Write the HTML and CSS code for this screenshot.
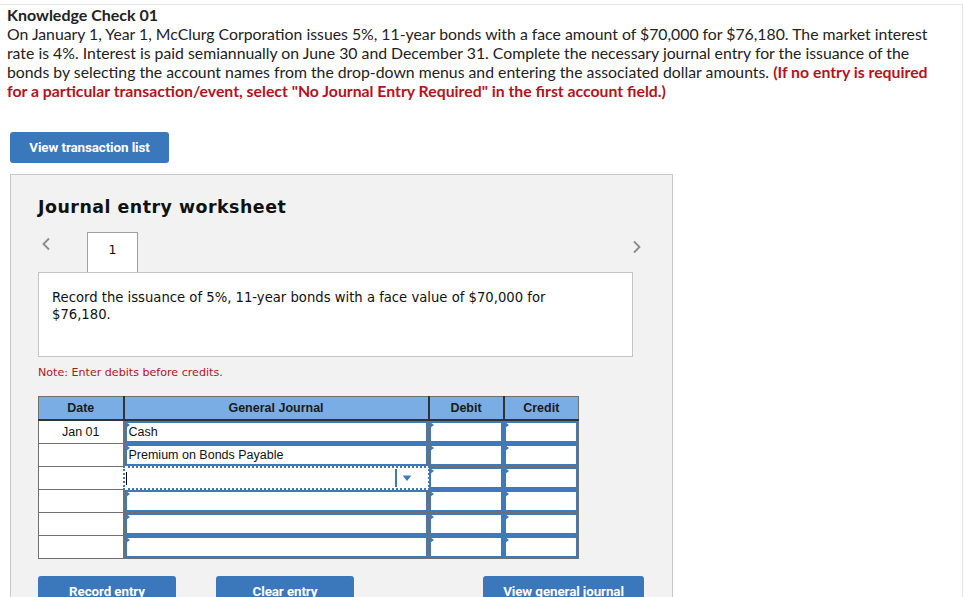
FILE: index.html
```html
<!DOCTYPE html>
<html>
<head>
<meta charset="utf-8">
<link rel="stylesheet" href="styles.css">
</head>
<body>
<div class="page">
  <div class="intro">
    <div class="kc-title">Knowledge Check 01</div>
    <p class="kc-text">On January 1, Year 1, McClurg Corporation issues 5%, 11-year bonds with a face amount of $70,000 for $76,180. The market interest<br>rate is 4%. Interest is paid semiannually on June 30 and December 31. Complete the necessary journal entry for the issuance of the<br>bonds by selecting the account names from the drop-down menus and entering the associated dollar amounts. <span class="kc-red">(If no entry is required<br>for a particular transaction/event, select "No Journal Entry Required" in the first account field.)</span></p>
  </div>
  <button class="btn btn-list">View transaction list</button>
  <div class="panel">
    <h2 class="ws-title">Journal entry worksheet</h2>
    <div class="nav">
      <span class="chev chev-left"><svg width="10" height="14" viewBox="0 0 10 14"><path d="M8 1.5 L2.5 7 L8 12.5" fill="none" stroke="#8a8a8a" stroke-width="1.8"/></svg></span>
      <div class="tab">1</div>
      <span class="spacer"></span>
      <span class="chev chev-right"><svg width="10" height="14" viewBox="0 0 10 14"><path d="M2 1.5 L7.5 7 L2 12.5" fill="none" stroke="#8a8a8a" stroke-width="1.8"/></svg></span>
    </div>
    <div class="desc">Record the issuance of 5%, 11-year bonds with a face value of $70,000 for $76,180.</div>
    <div class="note">Note: Enter debits before credits.</div>
    <table class="journal">
      <colgroup><col class="c-date"><col class="c-gj"><col class="c-amt"><col class="c-amt"></colgroup>
      <thead>
        <tr><th>Date</th><th>General Journal</th><th>Debit</th><th>Credit</th></tr>
      </thead>
      <tbody>
        <tr><td class="date">Jan 01</td><td class="in"><div class="field">Cash</div></td><td class="in"><div class="field"></div></td><td class="in"><div class="field"></div></td></tr>
        <tr><td class="date"></td><td class="in"><div class="field">Premium on Bonds Payable</div></td><td class="in"><div class="field"></div></td><td class="in"><div class="field"></div></td></tr>
        <tr><td class="date"></td><td class="in"><div class="select"><span class="caret"></span><span class="sep"></span><span class="arrow"></span></div></td><td class="in"><div class="field"></div></td><td class="in"><div class="field"></div></td></tr>
        <tr><td class="date"></td><td class="in"><div class="field"></div></td><td class="in"><div class="field"></div></td><td class="in"><div class="field"></div></td></tr>
        <tr><td class="date"></td><td class="in"><div class="field"></div></td><td class="in"><div class="field"></div></td><td class="in"><div class="field"></div></td></tr>
        <tr><td class="date"></td><td class="in"><div class="field"></div></td><td class="in"><div class="field"></div></td><td class="in"><div class="field"></div></td></tr>
      </tbody>
    </table>
    <div class="actions">
      <button class="btn btn-record">Record entry</button>
      <button class="btn btn-clear">Clear entry</button>
      <button class="btn btn-view">View general journal</button>
    </div>
  </div>
</div>
</body>
</html>
```
FILE: styles.css
```css
html, body {
  margin: 0;
  padding: 0;
  background: #ffffff;
}
.page {
  margin-top: 4px;
  width: 962px;
  border-top: 1px solid #e6e6e6;
  border-right: 1px solid #e6e6e6;
  padding: 0;
  height: 600px;
}
.intro {
  padding-left: 7px;
  font-family: Lato, sans-serif;
  font-size: 15.8px;
  line-height: 19px;
  color: #222;
}
.kc-title {
  font-weight: 700;
  font-size: 16px;
}
.kc-text {
  margin: 0;
  white-space: nowrap;
}
.kc-red {
  color: #b5121b;
  font-weight: 700;
}
.btn {
  display: block;
  border: none;
  border-radius: 3px;
  background: #3b77bb;
  color: #fff;
  font-family: Roboto, "Liberation Sans", sans-serif;
  font-weight: 700;
  font-size: 13.4px;
  height: 31px;
  padding: 0;
  letter-spacing: -0.1px;
}
.btn-list {
  margin: 32px 0 0 10px;
  width: 159px;
}
.panel {
  margin: 11px 0 0 10px;
  width: 663px;
  height: 440px;
  background: #f2f2f2;
  border: 1px solid #c8c8c8;
  padding: 0 0 0 27px;
  box-sizing: border-box;
}
.ws-title {
  margin: 22px 0 0 0;
  font-family: "DejaVu Sans", sans-serif;
  font-weight: 700;
  font-size: 17.4px;
  letter-spacing: 0.5px;
  line-height: 20px;
  color: #111;
}
.nav {
  display: flex;
  align-items: stretch;
  margin-top: 15px;
  height: 40px;
  width: 604px;
}
.chev {
  display: flex;
  align-items: flex-start;
}
.chev-left {
  padding: 5px 0 0 3px;
}
.chev-right {
  padding-top: 8px;
}
.tab {
  margin-left: 36px;
  width: 51px;
  height: 40px;
  box-sizing: border-box;
  background: #fff;
  border: 1px solid #a0a0a0;
  border-bottom: none;
  margin-bottom: -1px;
  position: relative;
  z-index: 1;
  text-align: center;
  font-family: "DejaVu Sans", sans-serif;
  font-size: 12.5px;
  line-height: 34px;
  color: #111;
}
.spacer {
  flex: 1;
}
.desc {
  width: 595px;
  height: 85px;
  box-sizing: border-box;
  background: #fff;
  border: 1px solid #c4c4c4;
  padding: 16px 30px 0 13px;
  font-family: "DejaVu Sans", sans-serif;
  font-size: 13.2px;
  line-height: 17px;
  color: #111;
}
.note {
  margin-top: 9px;
  font-family: "DejaVu Sans", sans-serif;
  font-size: 11.1px;
  line-height: 14px;
  color: #b0151a;
}
.journal {
  margin-top: 16px;
  border-collapse: collapse;
  width: 540px;
  table-layout: fixed;
  font-family: "Liberation Sans", Arial, sans-serif;
  font-size: 12.5px;
  color: #111;
}
.c-date { width: 85px; }
.c-gj { width: 305px; }
.c-amt { width: 75px; }
.journal th {
  background: #79ade3;
  height: 22px;
  padding: 0;
  border: 1px solid #707070;
  border-bottom: 2px solid #333;
  font-weight: 700;
  font-size: 12.5px;
  color: #1b1b1b;
}
.journal th + th {
  border-left: 2px solid #333;
}
.journal td {
  height: 22px;
  padding: 0;
  border: 1px solid #707070;
  background: #fff;
}
.journal td.date {
  text-align: center;
  border-right: 2px solid #707070;
}
.journal td.in {
  background: #fff;
}
.field {
  position: relative;
  box-sizing: border-box;
  height: 22px;
  border: 2px solid #3d79bb;
  background: #fff;
  padding-left: 2px;
  line-height: 18px;
  white-space: nowrap;
  overflow: hidden;
}
.field::before {
  content: "";
  position: absolute;
  left: -1px;
  top: -1px;
  border-left: 4px solid #3d79bb;
  border-top: 3px solid transparent;
  border-bottom: 3px solid transparent;
}
.select {
  position: relative;
  box-sizing: border-box;
  height: 24px;
  margin: -1px -2px -1px -2px;
  border: 2px dotted #3d79bb;
  background: #fff;
}
.caret {
  position: absolute;
  left: 1px;
  top: 4px;
  width: 1px;
  height: 13px;
  background: #000;
}
.sep {
  position: absolute;
  right: 31px;
  top: 1px;
  width: 2px;
  height: 18px;
  background: #3d79bb;
}
.arrow {
  position: absolute;
  right: 17px;
  top: 8px;
  border-top: 5px solid #3d79bb;
  border-left: 4px solid transparent;
  border-right: 4px solid transparent;
}
.arrow::before {
  content: "";
  position: absolute;
  left: -4px;
  top: -6px;
  width: 8px;
  height: 1px;
  background: #9ec0e6;
}
.actions {
  display: flex;
  margin-top: 17px;
}
.btn-record {
  width: 138px;
}
.btn-clear {
  width: 138px;
  margin-left: 40px;
}
.btn-view {
  width: 161px;
  margin-left: 129px;
}
```
